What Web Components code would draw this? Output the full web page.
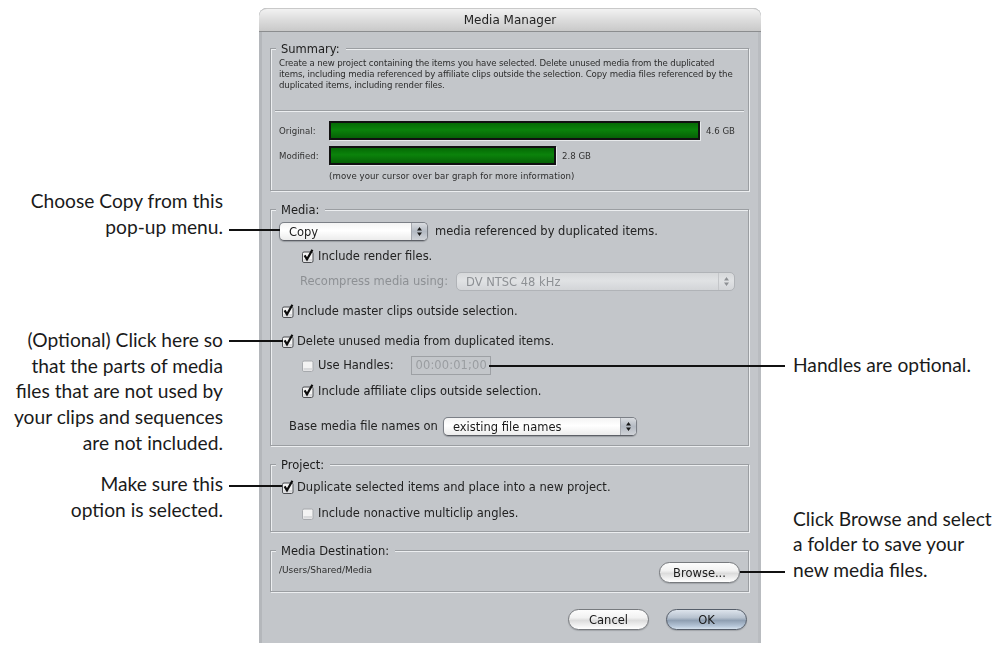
<!DOCTYPE html>
<html>
<head>
<meta charset="utf-8">
<title>Media Manager</title>
<style>
    body { margin: 0; background: #fff; }
</style>
</head>
<body>
<mm-page></mm-page>
<script>
// small helper, every element gets its own open shadow root from a template
function tpl(html) {
    const t = document.createElement('template');
    t.innerHTML = html;
    return t;
}

const calloutTpl = tpl(`
<style>
    :host {
        display: block;
        font: 19.2px/25.6px 'Lato', sans-serif;
        color: #1a1a1a;
    }
    :host([side="left"]) { text-align: right; }
</style>
<slot></slot>`);
class MmCallout extends HTMLElement {
    constructor() {
        super();
        this.attachShadow({mode: 'open'}).append(calloutTpl.content.cloneNode(true));
    }
}
customElements.define('mm-callout', MmCallout);

const leaderTpl = tpl(`
<style>
    :host {
        position: absolute;
        height: 1.6px;
        background: #111;
    }
</style>`);
class MmLeader extends HTMLElement {
    constructor() {
        super();
        this.attachShadow({mode: 'open'}).append(leaderTpl.content.cloneNode(true));
    }
}
customElements.define('mm-leader', MmLeader);

const windowTpl = tpl(`
<style>
    :host {
        display: block;
        box-sizing: border-box;
        height: 635px;
        background: #c3c6ca;
        border-radius: 8px 8px 0 0;
        box-shadow: inset 3px 0 0 #b4b7bb, inset -3px 0 0 #b9bcc0;
        font: 11.5px 'DejaVu Sans', sans-serif;
        color: #222;
        filter: blur(0.3px);
    }
    .title {
        height: 22px;
        border-bottom: 1px solid #8b8d8f;
        border-top: 1px solid #c9c9c9;
        box-sizing: content-box;
        border-radius: 8px 8px 0 0;
        background: linear-gradient(#f2f2f2, #dcdcdc 50%, #c9c9c9);
        text-align: center;
        font-size: 12px;
        line-height: 22px;
        color: #222;
    }
    .body {
        display: flex;
        flex-direction: column;
        gap: 18px;
        padding: 16px 12px 0 11px;
    }
</style>
<div class="title"></div>
<div class="body"><slot></slot></div>`);
class MmWindow extends HTMLElement {
    constructor() {
        super();
        this.attachShadow({mode: 'open'}).append(windowTpl.content.cloneNode(true));
        this.shadowRoot.querySelector('.title').textContent = this.getAttribute('title');
    }
}
customElements.define('mm-window', MmWindow);

const groupTpl = tpl(`
<style>
    :host {
        display: block;
        border: 1px solid #9b9ea2;
        box-shadow: inset 1px 1px 0 #eceef0, 1px 1px 0 #eceef0;
    }
    .legend {
        width: fit-content;
        height: 16px;
        margin: -8px 0 0 5px;
        padding: 0 6px 0 5px;
        background: #c3c6ca;
        line-height: 17px;
        font-size: 11.5px;
        color: #1c1c1c;
    }
    .content {
        display: flex;
        flex-direction: column;
    }
</style>
<div class="legend"></div>
<div class="content"><slot></slot></div>`);
class MmGroup extends HTMLElement {
    constructor() {
        super();
        this.attachShadow({mode: 'open'}).append(groupTpl.content.cloneNode(true));
        this.shadowRoot.querySelector('.legend').textContent = this.getAttribute('legend');
    }
}
customElements.define('mm-group', MmGroup);

const checkTpl = tpl(`
<style>
    :host {
        display: inline-block;
        width: 12px;
        height: 14px;
        flex: none;
    }
    svg { display: block; }
</style>
<svg width="12" height="14" viewBox="0 0 12 14">
    <rect class="box" x="0.5" y="3" width="10.5" height="10.5" rx="1.5" fill="#f3f3f3" stroke="#4c4e52"/>
    <rect x="1.5" y="10" width="8.5" height="2.6" fill="#d9dadc"/>
    <path class="tick" d="M2.6 6.4 L5 10.4 L10.4 0.8" fill="none" stroke="#0c0c0c" stroke-width="2.2"/>
</svg>`);
class MmCheck extends HTMLElement {
    constructor() {
        super();
        this.attachShadow({mode: 'open'}).append(checkTpl.content.cloneNode(true));
        if (!this.hasAttribute('checked')) {
            this.shadowRoot.querySelector('.tick').remove();
            this.shadowRoot.querySelector('.box').setAttribute('stroke', '#a6a9ad');
        }
    }
}
customElements.define('mm-check', MmCheck);

const popupTpl = tpl(`
<style>
    :host {
        display: inline-flex;
        box-sizing: border-box;
        height: 19px;
        border: 1px solid #7b7f86;
        border-bottom-color: #5d6067;
        border-radius: 5px;
        background: linear-gradient(#f4f4f4, #ffffff 45%, #ececec);
        overflow: hidden;
        box-shadow: 0 1px 1px #9a9da1;
        color: #1a1a1a;
        font-size: 11.5px;
    }
    :host([disabled]) {
        border-color: #b0b3b7;
        background: linear-gradient(#d6d8da, #e0e2e4 45%, #d3d5d8);
        box-shadow: none;
        color: #8d9094;
    }
    .label {
        flex: 1;
        padding-left: 9px;
        line-height: 18px;
    }
    .arrows {
        width: 15px;
        border-left: 1px solid #a5a8ae;
        background: linear-gradient(#d9dce0, #b4bac3 50%, #d0d3d8);
        display: flex;
        align-items: center;
        justify-content: center;
    }
    :host([disabled]) .arrows { background: none; border-left-color: #c4c6c9; }
    svg { display: block; }
</style>
<div class="label"><slot></slot></div>
<div class="arrows">
    <svg width="7" height="11" viewBox="0 0 7 11">
        <path d="M3.5 1 L6 4.4 H1 Z M3.5 10 L6 6.6 H1 Z" fill="currentColor"/>
    </svg>
</div>`);
class MmPopup extends HTMLElement {
    constructor() {
        super();
        this.attachShadow({mode: 'open'}).append(popupTpl.content.cloneNode(true));
    }
}
customElements.define('mm-popup', MmPopup);

const buttonTpl = tpl(`
<style>
    :host {
        display: inline-flex;
        box-sizing: border-box;
        width: 81px;
        height: 21px;
        border-radius: 11px;
        border: 1.5px solid #777a7e;
        background: linear-gradient(#fdfdfd, #f2f2f2 40%, #dcdcdc 55%, #f4f4f4 85%, #ffffff);
        align-items: center;
        justify-content: center;
        font-size: 11.5px;
        color: #1a1a1a;
        box-shadow: 0 1px 1px #a2a5a9;
    }
    :host([default]) {
        border-color: #565e6a;
        background: linear-gradient(#dde4ec, #b7c2cf 40%, #8f9fb2 55%, #b6c6d8 85%, #d6e2ee);
    }
</style>
<slot></slot>`);
class MmButton extends HTMLElement {
    constructor() {
        super();
        this.attachShadow({mode: 'open'}).append(buttonTpl.content.cloneNode(true));
    }
}
customElements.define('mm-button', MmButton);

const barTpl = tpl(`
<style>
    :host {
        display: flex;
        align-items: center;
        font-size: 8.6px;
        color: #333;
    }
    .name { width: 50px; }
    .bar {
        box-sizing: border-box;
        height: 19px;
        border: 2px solid #111;
        background: linear-gradient(#056a05, #0b830b 45%, #066106);
        box-shadow: 1px 1px 0 #e8eaec;
    }
    .size { margin-left: 6px; }
</style>
<span class="name"></span>
<div class="bar"></div>
<span class="size"></span>`);
class MmBar extends HTMLElement {
    constructor() {
        super();
        this.attachShadow({mode: 'open'}).append(barTpl.content.cloneNode(true));
        const s = this.shadowRoot;
        s.querySelector('.name').textContent = this.getAttribute('name');
        s.querySelector('.size').textContent = this.getAttribute('size');
        s.querySelector('.bar').style.width = this.getAttribute('bar') + 'px';
    }
}
customElements.define('mm-bar', MmBar);

const pageTpl = tpl(`
<style>
    :host {
        display: grid;
        grid-template-columns: 223px 502px 1fr;
        column-gap: 36px;
        position: relative;
        width: 996px;
        height: 648px;
        overflow: hidden;
    }
    .left, .right { display: flex; flex-direction: column; }
    .right { margin-left: -4px; }
    mm-window { margin-top: 8px; }

    .row {
        display: flex;
        align-items: center;
        gap: 3px;
        height: 20px;
    }
    .note { font-size: 8.6px; line-height: 11px; color: #2c2c2c; letter-spacing: -0.12px; }
    .rule { height: 1px; background: #9b9ea2; border-bottom: 1px solid #eceef0; margin: 19px 4px 0; }
    .foot { display: flex; justify-content: flex-end; gap: 17px; margin: -1px 2px 0 0; }
</style>
<div class="left">
    <mm-callout side="left" style="margin-top:188px">Choose Copy from this<br>pop-up menu.</mm-callout>
    <mm-callout side="left" style="margin-top:88px">(Optional) Click here so<br>that the parts of media<br>files that are not used by<br>your clips and sequences<br>are not included.</mm-callout>
    <mm-callout side="left" style="margin-top:16px">Make sure this<br>option is selected.</mm-callout>
</div>
<mm-window title="Media Manager">
    <mm-group legend="Summary:" style="height:141px">
        <div class="note" style="padding:1px 8px 0">Create a new project containing the items you have selected. Delete unused media from the duplicated items, including media referenced by affiliate clips outside the selection. Copy media files referenced by the duplicated items, including render files.</div>
        <div class="rule"></div>
        <mm-bar name="Original:" bar="371" size="4.6 GB" style="margin:9px 0 0 8px"></mm-bar>
        <mm-bar name="Modified:" bar="227" size="2.8 GB" style="margin:6px 0 0 8px"></mm-bar>
        <div class="note" style="margin:6px 0 0 58px;letter-spacing:.08px">(move your cursor over bar graph for more information)</div>
    </mm-group>
    <mm-group legend="Media:" style="height:235px">
        <div class="row" style="margin:3px 0 0 8px;gap:7px"><mm-popup style="width:149px">Copy</mm-popup><span>media referenced by duplicated items.</span></div>
        <div class="row" style="margin:5px 0 0 31px;gap:4px"><mm-check checked></mm-check><span>Include render files.</span></div>
        <div class="row" style="margin:5px 0 0 29px;gap:8px;color:#8d9094"><span>Recompress media using:</span><mm-popup disabled style="width:279px">DV NTSC 48 kHz</mm-popup></div>
        <div class="row" style="margin:10px 0 0 11px"><mm-check checked></mm-check><span>Include master clips outside selection.</span></div>
        <div class="row" style="margin:10px 0 0 11px"><mm-check checked></mm-check><span>Delete unused media from duplicated items.</span></div>
        <div class="row" style="margin:4px 0 0 31px;gap:4px"><mm-check></mm-check><span>Use Handles:</span><span style="box-sizing:border-box;width:80px;height:19px;margin-left:13px;border:1px solid #9da0a4;line-height:17px;padding-left:4px;color:#9a9da1;letter-spacing:.1px">00:00:01;00</span></div>
        <div class="row" style="margin:6px 0 0 31px;gap:4px"><mm-check checked></mm-check><span>Include affiliate clips outside selection.</span></div>
        <div class="row" style="margin:15px 0 0 18px;gap:5px"><span>Base media file names on</span><mm-popup style="width:194px">existing file names</mm-popup></div>
    </mm-group>
    <mm-group legend="Project:" style="height:66px">
        <div class="row" style="margin:4px 0 0 11px"><mm-check checked></mm-check><span>Duplicate selected items and place into a new project.</span></div>
        <div class="row" style="margin:6px 0 0 31px;gap:4px"><mm-check></mm-check><span>Include nonactive multiclip angles.</span></div>
    </mm-group>
    <mm-group legend="Media Destination:" style="height:40px">
        <div class="note" style="padding-left:8px;margin-top:6px;font-size:9px;letter-spacing:0">/Users/Shared/Media</div>
        <div style="display:flex;justify-content:flex-end;margin:-14px 8px 0 0"><mm-button>Browse...</mm-button></div>
    </mm-group>
    <div class="foot"><mm-button>Cancel</mm-button><mm-button default>OK</mm-button></div>
</mm-window>
<div class="right">
    <mm-callout style="margin-top:352px">Handles are optional.</mm-callout>
    <mm-callout style="margin-top:128px">Click Browse and select<br>a folder to save your<br>new media files.</mm-callout>
</div>
<mm-leader style="left:229px;top:229px;width:51px"></mm-leader>
<mm-leader style="left:229px;top:340px;width:54px"></mm-leader>
<mm-leader style="left:229px;top:485px;width:53px"></mm-leader>
<mm-leader style="left:489px;top:365px;width:296px"></mm-leader>
<mm-leader style="left:740px;top:571px;width:45px"></mm-leader>`);
class MmPage extends HTMLElement {
    constructor() {
        super();
        this.attachShadow({mode: 'open'}).append(pageTpl.content.cloneNode(true));
    }
}
customElements.define('mm-page', MmPage);
</script>
</body>
</html>
